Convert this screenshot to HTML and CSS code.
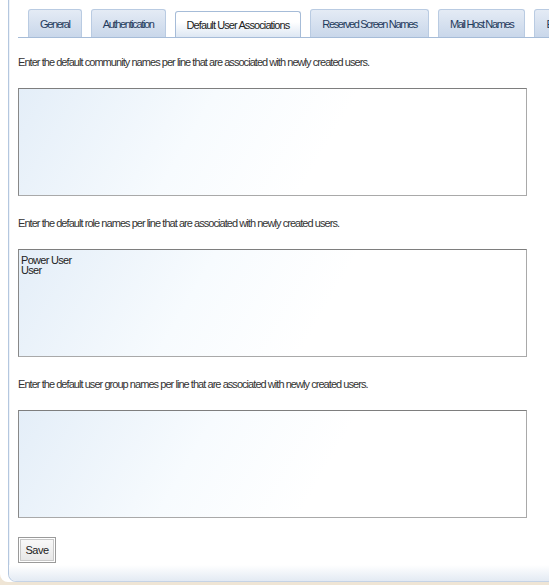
FILE: index.html
```html
<!DOCTYPE html>
<html>
<head>
<meta charset="utf-8">
<link rel="stylesheet" href="styles.css">
</head>
<body>
<div class="portlet">
  <div class="panel">
    <ul class="tabs">
      <li class="tab">General</li>
      <li class="tab">Authentication</li>
      <li class="tab selected">Default User Associations</li>
      <li class="tab">Reserved Screen Names</li>
      <li class="tab">Mail Host Names</li>
      <li class="tab">Email Notifications</li>
    </ul>
    <div class="content">
      <p class="label first">Enter the default community names per line that are associated with newly created users.</p>
      <textarea class="field"></textarea>
      <p class="label">Enter the default role names per line that are associated with newly created users.</p>
      <textarea class="field">Power User
User</textarea>
      <p class="label">Enter the default user group names per line that are associated with newly created users.</p>
      <textarea class="field"></textarea>
      <div class="actions"><button class="save">Save</button></div>
    </div>
  </div>
  <div class="footer"></div>
</div>
</body>
</html>
```
FILE: styles.css
```css
html, body {
  margin: 0;
  padding: 0;
}
body {
  background: #efe5d5;
  font-family: "Liberation Sans", Arial, sans-serif;
  font-size: 11px;
  color: #333333;
  overflow: hidden;
  width: 549px;
  height: 585px;
}
.portlet {
  background: #ffffff;
  margin-left: 8px;
  width: 560px;
  height: 582px;
  border-left: 1px solid #b4c7df;
  border-bottom: 1px solid #c5d3e6;
  border-bottom-left-radius: 8px;
  box-shadow: inset 1px 0 0 #eef3f9, -8px 0 0 #ffffff;
  display: flex;
  flex-direction: column;
  box-sizing: border-box;
}
.panel {
  flex: 1;
  padding: 9px 0 0 9px;
}
.tabs {
  list-style: none;
  margin: 0;
  padding: 0 0 0 10px;
  display: flex;
  align-items: flex-end;
  gap: 9px;
  border-bottom: 1px solid #a6bcd8;
  height: 28px;
  white-space: nowrap;
  overflow: hidden;
}
.tab {
  height: 28px;
  line-height: 28px;
  padding: 0 11px;
  border: 1px solid #b9cbe2;
  border-bottom: none;
  border-radius: 3px 3px 0 0;
  background: linear-gradient(#e4ebf5, #c9d7ea);
  color: #1f3a5c;
  letter-spacing: -1.35px;
  box-sizing: border-box;
  flex: none;
}
.tab.selected {
  height: 26px;
  line-height: 26px;
  background: linear-gradient(#ffffff 40%, #dde7f3);
  color: #222;
  padding: 0 11px;
  letter-spacing: -0.9px;
  border-color: #a6bcd8;
}
.label {
  margin: 21px 0 19px 0;
  letter-spacing: -0.95px;
  color: #333;
  line-height: 13px;
  white-space: nowrap;
}
.label.first {
  margin-top: 18px;
}
.field {
  display: block;
  width: 509px;
  height: 108px;
  margin: 0;
  padding: 5px 2px;
  box-sizing: border-box;
  border: 1px solid #a9a9a9;
  border-top-color: #7e7e7e;
  border-left-color: #888;
  background: linear-gradient(120deg, #e4eef8 0%, #f7fbfe 35%, #ffffff 60%);
  font-family: "Liberation Sans", Arial, sans-serif;
  font-size: 11px;
  letter-spacing: -0.7px;
  line-height: 10px;
  color: #222;
  resize: none;
  overflow: hidden;
}
.actions {
  margin-top: 19px;
}
.save {
  width: 38px;
  height: 26px;
  padding: 0;
  font-family: "Liberation Sans", Arial, sans-serif;
  font-size: 11px;
  color: #222;
  background: linear-gradient(#fafafa, #e6e6e6);
  border: 1px solid #9a9a9a;
  box-shadow: inset 0 0 0 1px #fff, inset 0 0 0 2px #c8c8c8;
  letter-spacing: -0.5px;
}
.footer {
  height: 16px;
  background: linear-gradient(#ffffff, #e3eaf3);
  border-bottom-left-radius: 8px;
}
```
